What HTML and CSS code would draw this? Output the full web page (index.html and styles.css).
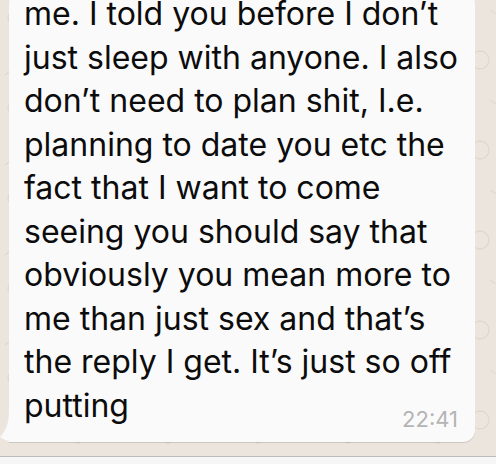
FILE: index.html
```html
<!DOCTYPE html>
<html lang="en">
<head>
<meta charset="utf-8">
<title>Chat</title>
<link rel="stylesheet" href="styles.css">
</head>
<body>
<main class="chat">
  <div class="bubble">
    <svg class="tail" width="30" height="32" viewBox="0 0 30 32"><path d="M9 0 C9 13 6 21 0 27 C5 31 11 32 20 32 L30 32 L30 0 Z"/></svg>
    <p class="text">me. I told you before I don’t<br>just sleep with anyone. I also<br>don’t need to plan shit, I.e.<br>planning to date you etc the<br>fact that I want to come<br>seeing you should say that<br>obviously you mean more to<br>me than just sex and that’s<br>the reply I get. It’s just so off<br>putting</p>
    <div class="meta"><span class="time">22:41</span></div>
  </div>
</main>
<footer class="composer"></footer>
</body>
</html>
```
FILE: styles.css
```css
html, body {
  margin: 0;
  padding: 0;
}
body {
  width: 496px;
  height: 464px;
  overflow: hidden;
  background-color: #ebe5dd;
  background-image: url("data:image/svg+xml;utf8,<svg xmlns='http://www.w3.org/2000/svg' width='90' height='90'><g fill='none' stroke='%23e0d8ce' stroke-width='1.3'><circle cx='14' cy='18' r='6'/><path d='M40 10 q10 8 20 0'/><rect x='60' y='40' width='14' height='18' rx='3'/><circle cx='30' cy='60' r='9'/><path d='M5 75 l10 -8 l8 10'/><circle cx='78' cy='80' r='3'/></g></svg>");
  font-family: Inter, "Noto Sans", sans-serif;
  display: flex;
  flex-direction: column;
}
.chat {
  height: 456px;
  flex: none;
  display: flex;
  flex-direction: column;
  justify-content: flex-end;
  overflow: hidden;
  padding: 0 0 14px 0;
  box-sizing: border-box;
}
.bubble {
  position: relative;
  margin-left: 9px;
  width: 466px;
  box-sizing: border-box;
  padding: 0 14px 10px 15px;
  background: #fbfafb;
  border-radius: 12px;
  border-bottom-left-radius: 0;
  box-shadow: 0 1px 0.5px rgba(0, 0, 0, 0.13);
  flex: none;
}
.text {
  position: relative;
  margin: 0;
  font-size: 32px;
  line-height: 43.5px;
  color: #0c0c0c;
  white-space: nowrap;
}
.meta {
  position: relative;
  display: flex;
  justify-content: flex-end;
  margin-top: -21px;
  padding-right: 3px;
}
.time {
  font-size: 22px;
  line-height: 26px;
  color: #b4b4b4;
}
.tail {
  position: absolute;
  left: -9px;
  bottom: 0;
  fill: #fbfafb;
}
.composer {
  flex: 1;
  background: #f6f6f6;
  border-top: 1px solid #bcbcbc;
}
```
